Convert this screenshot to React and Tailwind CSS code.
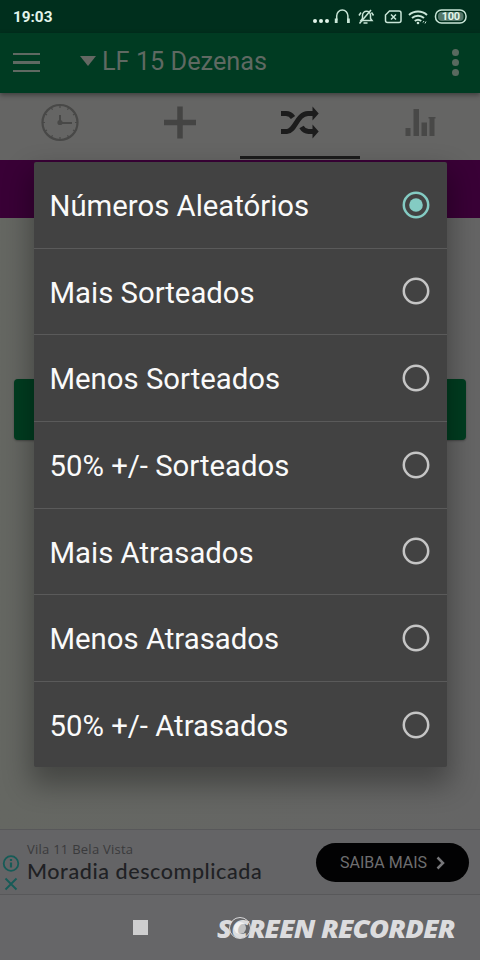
import { useState } from "react";

const OPTIONS = [
  "Números Aleatórios",
  "Mais Sorteados",
  "Menos Sorteados",
  "50% +/- Sorteados",
  "Mais Atrasados",
  "Menos Atrasados",
  "50% +/- Atrasados",
];

function StatusIcons() {
  return (
    <svg aria-hidden="true" viewBox="310 4 160 26" className="h-[26px] w-[160px]" fill="none" stroke="#c9e6d8" strokeWidth="1.5">
      <g fill="#e2f5eb" stroke="none">
        <circle cx="315" cy="21" r="2" />
        <circle cx="321" cy="21" r="2" />
        <circle cx="327" cy="21" r="2" />
      </g>
      {/* headphones */}
      <path d="M336.7 20.5v-4.7a5.6 5.8 0 0 1 11.2 0v4.7" />
      <path d="M336.200 18.500v4.500M348.400 18.500v4.500" strokeWidth="2.800" />
      {/* muted bell */}
      <path d="M361 20.500l1.500-2v-3a4 4.300 0 0 1 4-4.300 4 4.300 0 0 1 4 4.300v3l1.500 2zM359 15.500l2-3M373.500 15.500l-2-3M363.500 23h4" />
      <path d="M359.500 23.500L371 10" />
      {/* no sim */}
      <path d="M389.500 11h9.500a2 2 0 0 1 2 2v7.500a2 2 0 0 1-2 2h-11.500a2 2 0 0 1-2-2v-5.500z" />
      <path d="M391 14.500l5 5M396 14.500l-5 5" />
      {/* wifi */}
      <path d="M409 15a13.500 13.500 0 0 1 18 0" strokeWidth="2" />
      <path d="M412 18a9 9 0 0 1 12 0" strokeWidth="2" />
      <path d="M414.800 21a5 5 0 0 1 6.400 0" strokeWidth="2" />
      <circle cx="418" cy="23" r="1.300" fill="#c9e6d8" stroke="none" />
      <path d="M423 22.500l1-1.500M426 21.500l-1 2" strokeWidth="1" />
      {/* battery */}
      <rect x="435.500" y="10" width="30.500" height="13" rx="6" />
      <rect x="438" y="12" width="25.500" height="9" rx="4" fill="#54776a" stroke="none" />
      <text x="450.700" y="20.400" textAnchor="middle" fill="#e2f5eb" stroke="none" fontSize="11" fontWeight="700" letterSpacing="-0.4" fontFamily="Roboto, sans-serif">
        100
      </text>
    </svg>
  );
}

function ClockIcon() {
  return (
    <svg aria-hidden="true" viewBox="0 0 40 40" className="h-10 w-10" fill="none" stroke="#484847">
      <circle cx="20" cy="19.500" r="17.500" strokeWidth="2.200" />
      <path d="M20 12v7.500M20 20h12" strokeWidth="2" />
      <circle cx="20" cy="19.500" r="2.600" fill="#484847" stroke="none" />
      <path d="M20 3v2M20 34v2M3 19.500h2M35 19.500h2M11.500 5l1 1.700M28.500 5l-1 1.700M5.300 11l1.700 1M34.700 11l-1.700 1M5.300 28l1.700-1M34.700 28l-1.700-1M11.500 34l1-1.700M28.500 34l-1-1.700" strokeWidth="1.200" />
    </svg>
  );
}

function PlusIcon() {
  return (
    <svg aria-hidden="true" viewBox="0 0 40 40" className="h-10 w-10" fill="none" stroke="#444443" strokeWidth="5.500">
      <path d="M20 3.500v32M4 19.500h32" />
    </svg>
  );
}

function ShuffleIcon() {
  return (
    <svg aria-hidden="true" viewBox="0 0 40 40" className="h-10 w-10" fill="none" stroke="#1c1c1c" strokeWidth="5">
      <path d="M1 28.500h6c8 0 10-18 21-18h5" />
      <path d="M1 10.500h5c3 0 5 1 7 4M21.500 24c2 3.300 4 4.500 7 4.500h4.500" />
      <path d="M32.500 3.500l6.200 7-6.200 7zM32.500 21.500l6.200 7-6.200 7z" fill="#1c1c1c" stroke="none" />
    </svg>
  );
}

function ChartIcon() {
  return (
    <svg aria-hidden="true" viewBox="0 0 40 40" className="h-10 w-10" fill="#484847">
      <path d="M5.500 25h5v8h-5zM13.500 6h5.500v27h-5.500zM21.500 19.500h5.500v13.500h-5.500zM29.500 15h5v18h-5zM28.500 14h7v1.500h-7z" />
    </svg>
  );
}

function TabBar() {
  return (
    <nav className="grid h-[67px] grid-cols-4 bg-[#656564] pb-px">
      {[ClockIcon, PlusIcon, ShuffleIcon, ChartIcon].map((Icon, i) => (
        <button
          key={i}
          className={`flex justify-center border-b-[3px] pt-[10px] ${i === 2 ? "border-[#1c1c1c]" : "border-transparent"}`}
        >
          <Icon />
        </button>
      ))}
    </nav>
  );
}

function Radio({ checked }) {
  const color = checked ? "#84cbc3" : "#c5c5c5";
  return (
    <svg aria-hidden="true" viewBox="0 0 28 28" className="h-7 w-7 shrink-0" fill="none">
      <circle cx="14" cy="14" r="12.200" stroke={color} strokeWidth="2.500" />
      {checked && <circle cx="14" cy="14" r="6.800" fill={color} />}
    </svg>
  );
}

function OptionsDialog() {
  const [selected, setSelected] = useState(0);

  return (
    <ul className="absolute top-[162px] left-[33.5px] w-[413.5px] rounded-[2px] bg-[#424242] shadow-[0_14px_28px_4px_rgba(0,0,0,0.32)]">
      {OPTIONS.map((label, i) => (
        <li key={label} className="h-[86.65px] border-b border-[#5a5a5a] last:h-[85.4px] last:border-0">
          <button
            className="flex h-full w-full items-center justify-between pr-[17px] pl-[16px] text-left"
            onClick={() => setSelected(i)}
          >
            <span className="pt-[4px] text-[29.3px] leading-none whitespace-nowrap text-[#fafafa]">{label}</span>
            <Radio checked={selected === i} />
          </button>
        </li>
      ))}
    </ul>
  );
}

function AdBanner() {
  return (
    <div className="flex h-[66px] border-y border-[#58585a] bg-[#646466] font-['Lato',sans-serif]">
      <div className="flex w-[27px] flex-col items-center pt-[25px] pr-[5px]">
        <svg aria-hidden="true" viewBox="0 0 18 38" className="h-[38px] w-[18px]" fill="none" stroke="#165b57" strokeWidth="1.800">
          <circle cx="9" cy="8.500" r="7.300" />
          <path d="M9 7.500v5M9 4v2" strokeWidth="2.200" />
          <path d="M3.500 23.500l11 11M14.500 23.500l-11 11" />
        </svg>
      </div>
      <div className="flex-1 whitespace-nowrap">
        <p className="mt-[11px] font-['Open_Sans',sans-serif] text-[13px] leading-4 tracking-[0.25px] text-[#3a3a3c]">Vila 11 Bela Vista</p>
        <p className="mt-[1px] text-[21.5px] leading-[26px] font-medium tracking-[0.58px] text-[#202124]">Moradia descomplicada</p>
      </div>
      <button className="mt-[13px] mr-[11px] flex h-[39px] w-[153px] items-center justify-center gap-[9px] rounded-full bg-[#020203] font-['Roboto',sans-serif] text-[16px] text-[#6e6e70]">
        SAIBA MAIS
        <svg aria-hidden="true" viewBox="0 0 9 14" className="h-[14px] w-[9px]" fill="none" stroke="#77777a" strokeWidth="2.500">
          <path d="M1.500 1.500l5.500 5.500-5.500 5.500" />
        </svg>
      </button>
    </div>
  );
}

function NavigationBar() {
  return (
    <div className="flex h-[65px] items-center bg-[#666668]">
      <span className="ml-[133px] h-[15px] w-[15px] bg-[#cececf]" />
      <div className="relative ml-[69px] whitespace-nowrap">
        <span className="mt-[2px] block origin-left scale-x-[1.14] font-['Open_Sans',sans-serif] text-[24px] leading-none font-extrabold tracking-[-0.7px] text-[#dcdcde] italic">
          SCREEN RECORDER
        </span>
        <span className="absolute top-[2px] left-[12px] h-[22px] w-[22px] rounded-full border border-[#d8d8da]" />
        <span className="absolute top-[7px] left-[17px] h-[12px] w-[12px] rounded-full bg-white/60" />
      </div>
    </div>
  );
}

export default function App() {
  return (
    <div className="relative flex h-[960px] w-[480px] flex-col overflow-hidden bg-[#656565] font-['Roboto',sans-serif]">
      <div className="flex h-[33px] shrink-0 items-center justify-between bg-[#002f1d] pt-px pr-[10px] pl-[13px]">
        <span className="pt-[2px] text-[15.3px] leading-none font-bold text-[#e2f5eb]">19:03</span>
        <StatusIcons />
      </div>

      <header className="z-10 flex h-[60px] shrink-0 items-center bg-[#003b22] pr-[21px] pb-px pl-[13px] shadow-[0_2px_5px_rgba(0,0,0,0.4)]">
        <div className="flex flex-col gap-[6px]">
          <span className="h-[2.5px] w-[27px] bg-[#5f6962]" />
          <span className="h-[2.5px] w-[27px] bg-[#5f6962]" />
          <span className="h-[2.5px] w-[27px] bg-[#5f6962]" />
        </div>
        <svg aria-hidden="true" viewBox="0 0 16 10" className="mb-[3px] ml-[40px] h-[10px] w-[16px]" fill="#646863">
          <path d="M0 0h16l-8 10z" />
        </svg>
        <h1 className="mb-[2px] ml-[6px] flex-1 text-[25.3px] leading-none text-[#5f6962]">LF 15 Dezenas</h1>
        <div className="flex flex-col gap-[3px]">
          <span className="h-[7px] w-[7px] rounded-full bg-[#59695f]" />
          <span className="h-[7px] w-[7px] rounded-full bg-[#59695f]" />
          <span className="h-[7px] w-[7px] rounded-full bg-[#59695f]" />
        </div>
      </header>

      <TabBar />
      <div className="h-[58px] shrink-0 bg-[#390036]" />

      <main className="flex-1 bg-linear-to-r from-[#656762] to-[#656565] px-[14px] pt-[161px]">
        <div className="h-[61px] rounded-[4px] bg-[#003d20] shadow-[0_1px_2px_rgba(0,0,0,0.3)]" />
      </main>

      <AdBanner />
      <NavigationBar />
      <OptionsDialog />
    </div>
  );
}
